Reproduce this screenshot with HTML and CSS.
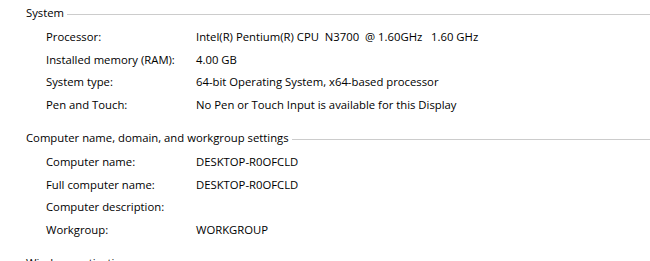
FILE: index.html
```html
<!DOCTYPE html>
<html>
<head>
    <meta charset="UTF-8">
    <title>System</title>
    <link rel="stylesheet" href="styles.css">
</head>
<body>
    <div class="section">
        <div class="heading"><span>System</span><span class="rule"></span></div>
        <div class="rows">
            <div class="label">Processor:</div>
            <div class="value">Intel(R) Pentium(R) CPU&nbsp; N3700&nbsp; @ 1.60GHz&nbsp;&nbsp; 1.60 GHz</div>
            <div class="label">Installed memory (RAM):</div>
            <div class="value">4.00 GB</div>
            <div class="label">System type:</div>
            <div class="value">64-bit Operating System, x64-based processor</div>
            <div class="label">Pen and Touch:</div>
            <div class="value">No Pen or Touch Input is available for this Display</div>
        </div>
    </div>
    <div class="section">
        <div class="heading"><span>Computer name, domain, and workgroup settings</span><span class="rule"></span></div>
        <div class="rows">
            <div class="label">Computer name:</div>
            <div class="value">DESKTOP-R0OFCLD</div>
            <div class="label">Full computer name:</div>
            <div class="value">DESKTOP-R0OFCLD</div>
            <div class="label">Computer description:</div>
            <div class="value"></div>
            <div class="label">Workgroup:</div>
            <div class="value">WORKGROUP</div>
        </div>
    </div>
    <div class="section">
        <div class="heading"><span>Windows activation</span><span class="rule"></span></div>
    </div>
</body>
</html>
```

FILE: styles.css
```css
body {
    margin: 0;
    padding-top: 2px;
    background: #fff;
    color: #000;
    font-family: "Open Sans", "Liberation Sans", sans-serif;
    font-size: 11.3px;
    line-height: 22px;
}
.section {
    margin-bottom: 11px;
}
.heading {
    display: flex;
    align-items: center;
    padding-left: 26px;
    height: 22px;
}
.rule {
    flex: 1;
    height: 1px;
    margin-left: 3px;
    margin-top: 2px;
    background: #cccccc;
}
.rows {
    display: grid;
    grid-template-columns: 150px 1fr;
    grid-auto-rows: 22.5px;
    padding-left: 46px;
    margin-top: 2px;
}
.label, .value {
    white-space: nowrap;
}
```
